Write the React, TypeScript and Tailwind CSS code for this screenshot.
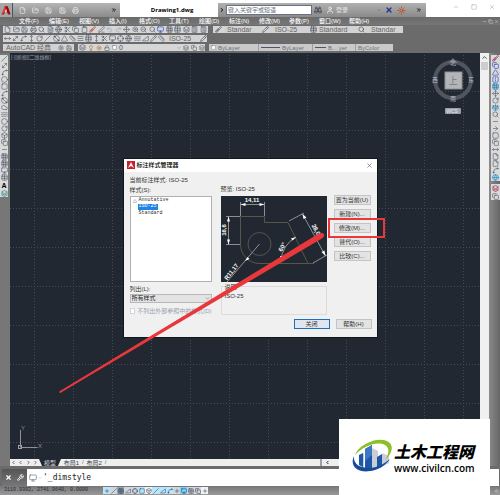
import {
  AlignJustify, ArrowLeft, ArrowRight, Binoculars, Box, Brush, Calculator, ChevronDown, ChevronLeft,
  ChevronRight, ChevronUp, ChevronsRight, Circle, Clipboard, Cloud, Copy, Crosshair, Diameter, File,
  FileText, FlipHorizontal, FolderOpen, Globe, Grid3x3, Layers, Lightbulb, Lock, Minus, Monitor, Move,
  MoveDiagonal, MoveHorizontal, MoveVertical, PenLine, Pencil, Plus, Printer, Redo2, RotateCw, Ruler,
  Save, Scale, Scissors, Search, Settings, Slash, Spline, Square, Sun, Table, Triangle, TriangleRight,
  Undo2, User, Waves, Wrench, X, ZoomIn, ZoomOut, type LucideIcon,
} from 'lucide-react';

type Tool = { name: string; icon: LucideIcon; color?: string };

const quickTools: Tool[] = [
  { name: '新建', icon: File },
  { name: '打开', icon: FolderOpen },
  { name: '保存', icon: Save },
  { name: '另存为', icon: Save },
  { name: '打印', icon: Printer },
  { name: '放弃', icon: Undo2 },
  { name: '重做', icon: Redo2 },
];

const menus = [
  '文件(F)', '编辑(E)', '视图(V)', '插入(I)', '格式(O)', '工具(T)',
  '绘图(D)', '标注(N)', '修改(M)', '参数(P)', '窗口(W)', '帮助(H)',
];

const standardTools: Tool[] = [
  { name: '新建图形', icon: File },
  { name: '打开图形', icon: FolderOpen },
  { name: '保存图形', icon: Save },
  { name: '打印图形', icon: Printer },
  { name: '打印预览', icon: Search },
  { name: '发布', icon: FileText },
  { name: '三维打印', icon: Globe },
  { name: '剪切', icon: Scissors },
  { name: '复制', icon: Copy },
  { name: '粘贴', icon: Clipboard },
  { name: '特性匹配', icon: Brush, color: 'text-orange-800' },
  { name: '块编辑器', icon: PenLine },
  { name: '撤销', icon: Undo2, color: 'text-gray-400' },
  { name: '恢复', icon: Redo2, color: 'text-gray-400' },
  { name: '平移', icon: Move },
  { name: '缩放', icon: ZoomIn },
  { name: '窗口缩放', icon: ZoomOut },
  { name: '上一个', icon: Search },
  { name: '特性', icon: Monitor, color: 'text-blue-800' },
  { name: '设计中心', icon: Grid3x3 },
  { name: '工具选项板', icon: Table },
  { name: '图纸集', icon: Layers },
  { name: '标记集', icon: Calculator },
  { name: '计算器', icon: Calculator },
];

const dimensionTools: Tool[] = [
  { name: '线性', icon: MoveHorizontal },
  { name: '对齐', icon: MoveDiagonal },
  { name: '弧长', icon: Spline },
  { name: '坐标', icon: MoveVertical },
  { name: '半径', icon: RotateCw },
  { name: '折弯', icon: Slash },
  { name: '直径', icon: Diameter },
  { name: '角度', icon: Triangle },
  { name: '快速标注', icon: Ruler },
  { name: '基线', icon: AlignJustify },
  { name: '连续', icon: Table },
  { name: '等距', icon: MoveVertical },
  { name: '打断', icon: Scissors },
  { name: '公差', icon: Monitor },
  { name: '圆心标记', icon: Crosshair },
  { name: '检验', icon: Globe },
  { name: '折弯线性', icon: Waves },
  { name: '编辑标注', icon: TriangleRight },
  { name: '编辑文字', icon: Pencil },
  { name: '标注更新', icon: Ruler },
];

const drawTools: Tool[] = [
  { name: '直线', icon: Slash },
  { name: '构造线', icon: MoveDiagonal },
  { name: '多段线', icon: Spline },
  { name: '多边形', icon: Circle },
  { name: '矩形', icon: Square },
  { name: '圆弧', icon: Spline },
  { name: '圆', icon: Diameter },
  { name: '修订云线', icon: Cloud },
  { name: '样条曲线', icon: Waves },
  { name: '椭圆', icon: Circle },
  { name: '椭圆弧', icon: RotateCw },
  { name: '插入块', icon: Box },
  { name: '创建块', icon: Copy },
  { name: '点', icon: Minus },
  { name: '图案填充', icon: Grid3x3 },
  { name: '渐变色', icon: Grid3x3 },
  { name: '面域', icon: Monitor },
  { name: '表格', icon: Table },
];

const modifyTools: Tool[] = [
  { name: '删除', icon: Brush, color: 'text-rose-900' },
  { name: '复制对象', icon: Copy, color: 'text-blue-800' },
  { name: '镜像', icon: Triangle, color: 'text-blue-800' },
  { name: '偏移', icon: FlipHorizontal, color: 'text-blue-800' },
  { name: '阵列', icon: Grid3x3, color: 'text-sky-700' },
  { name: '移动', icon: Move },
  { name: '旋转', icon: RotateCw },
  { name: '比例', icon: Scale, color: 'text-sky-700' },
  { name: '拉伸', icon: Search },
  { name: '修剪', icon: Minus },
  { name: '延伸', icon: ArrowRight },
  { name: '打断于点', icon: Square },
  { name: '打断对象', icon: Copy },
  { name: '合并', icon: MoveHorizontal },
  { name: '倒角', icon: File },
  { name: '圆角', icon: File },
  { name: '光顺曲线', icon: Spline },
  { name: '分解', icon: Globe, color: 'text-sky-600' },
];

const statusTools: Tool[] = [
  { name: '推断约束', icon: Plus, color: 'bg-sky-200' },
  { name: '捕捉模式', icon: Slash, color: 'bg-gray-300' },
  { name: '栅格显示', icon: Grid3x3, color: 'bg-slate-400' },
  { name: '正交模式', icon: TriangleRight, color: 'bg-gray-300' },
  { name: '极轴追踪', icon: Crosshair, color: 'bg-gray-300' },
  { name: '对象捕捉', icon: Square, color: 'bg-sky-200' },
  { name: '三维捕捉', icon: Box, color: 'bg-gray-100' },
  { name: '对象追踪', icon: Slash, color: 'bg-sky-200' },
  { name: '动态UCS', icon: TriangleRight, color: 'bg-sky-200' },
  { name: '动态输入', icon: Spline, color: 'bg-sky-200' },
  { name: '线宽', icon: Plus, color: 'bg-gray-300' },
  { name: '透明度', icon: Monitor, color: 'bg-sky-300' },
  { name: '快捷特性', icon: Table, color: 'bg-gray-300' },
  { name: '选择循环', icon: Copy, color: 'bg-gray-300' },
  { name: '注释监视器', icon: Plus, color: 'bg-gray-100' },
];

const dialogButton =
  'flex h-[10px] w-full items-center justify-center border border-[#c4c4c4] bg-[#e3e3e3] text-[6px] leading-none whitespace-nowrap text-[#333]';

const ToolButton = ({ tool, className = '' }: { tool: Tool; className?: string }) => {
  const Icon = tool.icon;
  return (
    <button aria-label={tool.name} className={`flex items-center justify-center ${tool.color ?? 'text-gray-600'} ${className}`}>
      <Icon size={7} strokeWidth={2} />
    </button>
  );
};

const StyleBox = ({ label, className }: { label: string; className: string }) => (
  <button className={`flex h-full shrink-0 items-center bg-[#d2d2d2] text-[7px] leading-none whitespace-nowrap text-[#666] ${className}`}>
    {label}
  </button>
);

const AppLogo = ({ className }: { className: string }) => (
  <svg viewBox="0 0 20 20" className={className}>
    <path d="M1 19 8 2h5l6 17h-5l-4-11-4 11z" fill="#b5121b" />
    <path d="M8 2 1 19l9-6z" fill="#e2413f" />
    <path d="M10 13l9 6-6-17z" fill="#8c0e15" />
    <path d="M10 8l2 5-4 1z" fill="#fff" />
  </svg>
);

const TitleBar = () => (
  <header className="flex h-[17px] items-stretch bg-white pt-[3px]">
    <div className="flex w-[120px] items-center bg-linear-to-b from-[#b5b5b5] to-[#8b8b8b]">
      <button aria-label="应用程序菜单" className="flex h-full w-[13px] items-center justify-center border-r border-gray-600 bg-[#a6a6a6]">
        <AppLogo className="size-[10px]" />
      </button>
      <div className="flex flex-1 items-center justify-between pr-[3px] pl-[4px]">
        {quickTools.map((tool, i) => (
          <ToolButton key={tool.name} tool={{ ...tool, color: i < 5 ? 'text-gray-100' : 'text-gray-400' }} className="w-[10px]" />
        ))}
        <ChevronsRight size={6} strokeWidth={3} className="text-black" />
      </div>
    </div>
    <h1 className="flex w-[98px] items-center justify-center pl-[6px] font-['Open_Sans'] text-[6px] leading-none font-bold text-black">
      Drawing1.dwg
    </h1>
    <div className="flex w-[208px] items-center bg-linear-to-b from-[#b0b0b0] to-[#8b8b8b] pr-[4px]">
      <ChevronRight size={6} strokeWidth={4} className="ml-[1px] text-black" />
      <input
        aria-label="搜索"
        placeholder="键入关键字或短语"
        className="mr-[2px] ml-[1px] h-[10px] w-[86px] border border-gray-500 bg-white px-[1px] text-[6px] leading-none placeholder:text-gray-500"
      />
      <Binoculars size={8} className="text-gray-700" />
      <User size={8} className="ml-[4px] text-white" />
      <button className="ml-[2px] text-[6px] leading-none text-gray-200">登录</button>
      <ChevronDown size={4} className="mr-[4px] ml-auto text-gray-700" />
      <X size={8} strokeWidth={4} className="text-blue-900" />
      <Sun size={9} className="mr-[10px] ml-[4px] text-orange-700" />
      <ChevronsRight size={6} strokeWidth={3} className="text-black" />
    </div>
    <div className="flex flex-1 items-start justify-end gap-[12px] pr-[5px] pt-[1px] text-gray-400">
      <button aria-label="最小化"><Minus size={6} strokeWidth={2} /></button>
      <button aria-label="最大化"><Square size={6} strokeWidth={2} /></button>
      <button aria-label="关闭窗口"><X size={6} strokeWidth={2} /></button>
    </div>
  </header>
);

const MenuBar = () => (
  <nav className="flex h-[8px] items-center bg-linear-to-b from-[#6a6a6a] to-[#777] pl-[19px]">
    {menus.map((menu) => (
      <button key={menu} className="w-[30px] text-left text-[6px] leading-none font-medium whitespace-nowrap text-white">
        {menu}
      </button>
    ))}
    <div className="ml-auto flex gap-[1px] pr-[1px] text-gray-300">
      <Minus size={5} />
      <Copy size={5} />
      <X size={5} />
    </div>
  </nav>
);

const Toolbars = () => (
  <div className="flex flex-col gap-[2px] bg-[#6b6b6b] pt-[1px] pb-[2px] pl-[3px]">
    <div className="flex h-[7px] gap-[5px]">
      <div className="flex w-[205px] justify-between bg-[#d6d6d6] px-[1px]">
        {standardTools.map((tool) => <ToolButton key={tool.name} tool={tool} />)}
      </div>
      <div className="flex bg-[#d6d6d6]">
        <Brush size={7} className="mx-[2px] shrink-0 text-gray-700" />
        <StyleBox label="Standar" className="w-[38px] pl-[3px]" />
        <Pencil size={7} className="shrink-0 text-gray-700" />
        <StyleBox label="ISO-25" className="w-[41px] pl-[6px]" />
        <Table size={7} className="shrink-0 text-gray-700" />
        <StyleBox label="Standard" className="w-[41px] pl-[2px]" />
        <Search size={7} className="shrink-0 text-gray-700" />
        <StyleBox label="Standar" className="w-[38px] pl-[6px]" />
      </div>
    </div>
    <div className="flex h-[7px]">
      <div className="flex w-[163px] justify-between bg-[#d6d6d6] px-[1px]">
        {dimensionTools.map((tool) => <ToolButton key={tool.name} tool={tool} />)}
      </div>
      <StyleBox label="ISO-25" className="w-[34px] pl-[3px]" />
      <Pencil size={7} className="bg-[#d6d6d6] text-gray-700" />
    </div>
    <div className="flex h-[7px] gap-[4px]">
      <div className="flex w-[71px] items-center bg-[#d2d2d2]">
        <StyleBox label="AutoCAD 经典" className="flex-1 pl-[3px]" />
        <Settings size={6} className="mr-[2px] text-gray-600" />
        <Save size={6} className="mr-[2px] text-gray-600" />
      </div>
      <div className="flex w-[127px] items-center gap-[2px] bg-[#d6d6d6] pl-[1px] text-gray-600">
        <Layers size={7} />
        <Lightbulb size={6} className="text-yellow-700" />
        <Sun size={6} className="text-yellow-700" />
        <Lock size={6} />
        <Square size={5} fill="#fff" />
        <span className="text-[7px] leading-none">0</span>
        <ChevronDown size={4} className="ml-auto" />
        <Layers size={6} />
        <Copy size={6} />
        <Layers size={6} />
      </div>
      <div className="flex bg-[#c9c9c9] text-[6px]">
        <button className="flex w-[49px] items-center gap-[2px] pl-[2px] leading-none text-gray-500">
          <Square size={5} fill="#fff" />ByLayer
        </button>
        <button className="flex w-[54px] items-center gap-[2px] border-l border-gray-400 pl-[2px] leading-none text-gray-500">
          <span className="h-px w-[19px] bg-gray-600" />ByLayer
        </button>
        <button className="flex w-[43px] items-center gap-[2px] border-l border-gray-400 pl-[2px] leading-none text-gray-500">
          <span className="h-px w-[11px] bg-gray-600" />B... yer
        </button>
        <button className="flex w-[38px] items-center border-l border-gray-400 pl-[2px] leading-none text-gray-500">
          ByColor
        </button>
      </div>
    </div>
  </div>
);

const CanvasGrid = () => (
  <svg className="absolute inset-0 size-full">
    <defs>
      <pattern id="grid" x="24" y="38" width="39" height="39" patternUnits="userSpaceOnUse">
        <path d="M0 .5H39M.5 0V39" stroke="#444b55" strokeWidth="1" strokeDasharray="1 2" />
      </pattern>
    </defs>
    <rect width="100%" height="100%" fill="url(#grid)" />
  </svg>
);

const ViewCube = () => (
  <svg viewBox="0 0 48 62" className="absolute top-[3px] right-[3px] h-[62px] w-[48px]">
    <circle cx="24" cy="24" r="18" fill="none" stroke="#50565f" strokeWidth="4" />
    <path d="M24 2l5 5H19z" fill="#6c7279" />
    <rect x="16" y="16" width="17" height="17" fill="#b3b5b8" stroke="#8d9094" />
    <g fill="#b8bcc2" fontSize="6" textAnchor="middle">
      <text x="24" y="9">北</text>
      <text x="24" y="45">南</text>
      <text x="6" y="26">西</text>
      <text x="42" y="26">东</text>
    </g>
    <text x="24" y="28" fill="#777b80" fontSize="9" textAnchor="middle">上</text>
    <rect x="16" y="52" width="16" height="6" rx="1" fill="#9a9ead" />
    <text x="23" y="57" fill="#e5e7eb" fontSize="5" textAnchor="middle">WCS</text>
  </svg>
);

const UcsIcon = () => (
  <svg viewBox="0 0 36 28" className="absolute bottom-[6px] left-[6px] h-[28px] w-[36px]">
    <path d="M4.500 5v17M4.500 22.500h17" stroke="#8d9198" fill="none" />
    <rect x="2.500" y="20.500" width="3" height="3" fill="none" stroke="#9ca0a7" />
    <text x="5" y="5" fill="#8d9198" fontSize="6">Y</text>
    <text x="22" y="23" fill="#8d9198" fontSize="6">X</text>
  </svg>
);

const LayoutTabs = () => (
  <div className="flex h-[7px] items-stretch bg-[#eeeeec] text-[6px] leading-none">
    <div className="flex w-[29px] items-center justify-around text-gray-600">
      <ChevronLeft size={5} strokeWidth={4} />
      <ChevronLeft size={5} strokeWidth={4} />
      <ChevronRight size={5} strokeWidth={4} />
      <ChevronRight size={5} strokeWidth={4} />
    </div>
    <button className="w-[22px] bg-[#222831] leading-none text-gray-300 [clip-path:polygon(0_0,100%_0,86%_100%,14%_100%)]">模型</button>
    <button className="w-[21px] leading-none text-gray-700">布局1</button>
    <span className="text-gray-500">/</span>
    <button className="w-[21px] leading-none text-gray-700">布局2</button>
    <span className="text-gray-500">/</span>
    <span className="ml-auto mr-[150px] flex items-center border-l-2 border-gray-400 pl-[3px]">
      <ChevronLeft size={5} strokeWidth={4} />
    </span>
  </div>
);

const Preview = () => (
  <svg viewBox="0 0 106 86" className="h-[86px] w-full bg-[#222831]">
    <g fill="none" stroke="#56564a">
      <path d="M19.500 48V20.500H43.500V26.500H67L87 67.500H38A19 19 0 0 1 19.500 48M87 67.500h6" />
      <circle cx="38.500" cy="48" r="11.500" />
    </g>
    <g fill="none" stroke="#b9bcc0" strokeWidth=".7">
      <path d="M19.500 6v14M43.500 6v14M20 8.500h23" />
      <path d="M5 20.500h14M5 48.500h14M7.500 21v27" />
      <path d="M68 25l15-8M92 67l14-8M81.500 18l23 42" />
      <path d="M38.500 48L6 86M75 41A29 29 0 0 0 60 65" />
    </g>
    <g fill="#fff">
      <path d="M19.500 8.500l5-1.500v3zM43.500 8.500l-5-1.500v3z" />
      <path d="M7.500 20.500L6 25.500h3zM7.500 48.500L6 43.500h3z" />
      <path d="M81.500 18l1 5 3-1.500zM104.500 60l-4-4 3-1.500zM24 65l4.500-2-2-2z" />
      <path d="M75 41l-5 1.500 1.500 2zM60 65l-1-5h3z" />
    </g>
    <g fill="#fff" fontSize="6" fontWeight="600" textAnchor="middle">
      <text x="31" y="6">14,11</text>
      <text transform="translate(5 34) rotate(-90)">16,6</text>
      <text transform="translate(12 77) rotate(-52)">R11,17</text>
      <text transform="translate(63 52) rotate(-62)">60°</text>
      <text transform="translate(94 36) rotate(62)">28,07</text>
    </g>
  </svg>
);

const StyleDialog = () => (
  <section role="dialog" aria-label="标注样式管理器" className="relative w-[253px] bg-[#f0f0f0] text-[6px] leading-none text-[#333] shadow-[0_0_0_1px_#11161c]">
    <div className="flex h-[13px] items-center bg-white pr-[4px] pl-[3px]">
      <span className="mr-[2px] flex size-[8px] items-center justify-center bg-[#c8202c]">
        <svg viewBox="0 0 8 8" className="size-[8px]">
          <path d="M1 7l3-6 3 6-3-2z" fill="#fff" />
        </svg>
      </span>
      <h2 className="text-[6px] leading-none font-medium text-black">标注样式管理器</h2>
      <button aria-label="关闭对话框" className="ml-auto text-gray-600"><X size={7} strokeWidth={2} /></button>
    </div>
    <p className="px-[6px] pt-[5px] pb-[2px]">当前标注样式: ISO-25</p>
    <div className="flex px-[6px]">
      <div className="mr-[9px] w-[82px]">
        <h3 className="flex h-[11px] items-center">样式(S):</h3>
        <ul className="h-[86px] border border-[#b0b0b0] bg-white pt-px pl-[2px] font-['Liberation_Mono'] text-[5px]">
          <li className="flex h-[6px] items-center">
            <Triangle size={4} className="mr-[2px] text-gray-600" />
            <button className="leading-none">Annotative</button>
          </li>
          <li className="flex h-[6px] items-center pl-[5px]">
            <button className="h-[6px] bg-[#1f84e6] pr-px pl-px leading-none text-white">ISO-25</button>
          </li>
          <li className="flex h-[7px] items-center pl-[6px]">
            <button className="leading-none">Standard</button>
          </li>
        </ul>
        <label htmlFor="list-filter" className="mt-[2px] flex h-[10px] items-center">列出(L):</label>
        <div className="relative">
          <select id="list-filter" className="block h-[9px] w-full appearance-none border border-[#b8b8b8] bg-[#e3e3e3] pl-px text-[6px] leading-none text-[#222]">
            <option>所有样式</option>
            <option>正在使用的样式</option>
          </select>
          <ChevronDown size={5} className="pointer-events-none absolute top-[2px] right-[2px] text-gray-600" />
        </div>
        <label className="mt-[3px] flex h-[10px] items-center gap-[2px] whitespace-nowrap text-gray-400">
          <input type="checkbox" disabled className="size-[6px] appearance-none border border-gray-300 bg-white" />
          不列出外部参照中的样式(D)
        </label>
      </div>
      <div className="mr-[7px] flex-1">
        <h3 className="flex h-[11px] items-start pt-px">预览: ISO-25</h3>
        <Preview />
        <fieldset className="mt-[2px] h-[31px] border border-[#dcdcdc] pl-[3px]">
          <legend className="leading-none">说明</legend>
          <p className="pt-[3px]">ISO-25</p>
        </fieldset>
      </div>
      <div className="flex w-[37px] flex-col gap-[4px] pt-[10px]">
        <button className={dialogButton}>置为当前(U)</button>
        <button className={dialogButton}>新建(N)...</button>
        <button className={dialogButton}>修改(M)...</button>
        <button className={dialogButton}>替代(O)...</button>
        <button className={dialogButton}>比较(C)...</button>
      </div>
    </div>
    <div className="flex justify-end gap-[6px] px-[5px] pt-[3px] pb-[8px]">
      <div className="w-[36px]">
        <button className="flex h-[10px] w-full items-center justify-center border border-[#1f6fc0] bg-[#e1e6ec] text-[6px] leading-none">关闭</button>
      </div>
      <div className="w-[36px]">
        <button className={dialogButton}>帮助(H)</button>
      </div>
    </div>
    {/* callout pointing at the modify button */}
    <svg viewBox="0 0 253 178" className="pointer-events-none absolute top-0 left-0 h-[178px] w-[253px] overflow-visible">
      <path d="M-64 234L-64 232.500L194 75C200 72 203 77 197 80Z" fill="#e8383c" />
      <path d="M-64 233L60 158" stroke="#e8383c" strokeWidth="1.500" strokeLinecap="round" />
      <rect x="205" y="60" width="55" height="18" fill="none" stroke="#e8383c" strokeWidth="2" />
    </svg>
  </section>
);

const SiteBadge = () => (
  <a href="#civilcn" className="absolute right-[10px] bottom-0 flex h-[76px] w-[151px] items-start bg-white pt-[20px] pl-[13px]">
    <svg viewBox="0 0 42 36" className="h-[36px] w-[42px]">
      <path d="M20 9l6 3v17l-6 1zM30 14l7 3v7l-7 4zM8 16l4-2v15l-4-2z" fill="#c9ced6" />
      <path d="M7 16l4-2v14l-4-2zM13 10l7-4v24l-7-1zM25 18l5-3v13l-5 2z" fill="#1f57a8" />
      <path d="M13 10l7-4v10l-7 6z" fill="#3b78c6" />
      <path d="M3 16C7 5 25-2 35 2c8 4 5 13-2 19 4-6 5-12 0-15C25 2 11 7 3 16z" fill="#8dbf26" />
      <path d="M2 17c-5 11 5 17 16 15 9-1 17-7 20-12-6 5-13 9-21 9C8 29 1 25 2 17z" fill="#174a9c" />
    </svg>
    <span className="flex flex-col pt-[5px]">
      <strong className="text-[16px] leading-[18px] font-black whitespace-nowrap text-black italic">土木工程网</strong>
      <span className="font-['Open_Sans'] text-[10px] leading-[12px] font-semibold whitespace-nowrap text-black">www.civilcn.com</span>
    </span>
  </a>
);

const App = () => {
  return (
    <div className="relative flex min-h-screen w-full flex-col overflow-hidden bg-[#6b6b6b] font-['Liberation_Sans','Noto_Sans_CJK_SC',sans-serif]">
      <TitleBar />
      <MenuBar />
      <Toolbars />

      <main className="flex flex-1 items-stretch">
        <div className="w-[10px] bg-[#777]">
          <div className="mt-[2px] flex w-[8px] flex-col bg-[#dadada]">
            {drawTools.map((tool) => <ToolButton key={tool.name} tool={tool} className="h-[7px]" />)}
            <button className="h-[8px] text-[7px] leading-none font-bold">A</button>
            <ToolButton tool={{ name: '添加选定对象', icon: Layers, color: 'text-teal-700' }} className="h-[8px]" />
          </div>
        </div>
        <div className="flex flex-1 flex-col">
          <div className="relative flex-1 overflow-hidden bg-[#222831]">
            <CanvasGrid />
            <p className="relative pt-[2px] pl-px text-[5px] leading-none text-gray-400">[-][俯视][二维线框]</p>
            <ViewCube />
            <UcsIcon />
          </div>
          <LayoutTabs />
        </div>
        <div className="flex w-[9px] flex-col items-center bg-[#f0f0f0]">
          <ChevronUp size={7} strokeWidth={3} className="mt-[1px] text-gray-700" />
          <div className="mt-[1px] h-[8px] w-[7px] bg-[#cdcdcd]" />
        </div>
        <div className="w-[11px] bg-linear-to-r from-[#8a8a8a] to-[#666] pl-[2px]">
          <div className="mt-[2px] flex flex-col bg-[#dadada]">
            {modifyTools.map((tool) => <ToolButton key={tool.name} tool={tool} className="h-[7px]" />)}
          </div>
          <div className="mt-[3px] flex flex-col bg-[#dadada]">
            <ToolButton tool={{ name: '绘图次序', icon: Layers, color: 'text-rose-900' }} className="h-[8px]" />
            <ToolButton tool={{ name: '后置', icon: Copy }} className="h-[8px]" />
          </div>
        </div>
      </main>

      <footer className="pt-[3px]">
        <div className="flex h-[17px] pr-px pl-[2px]">
          <div className="flex w-[25px] items-center justify-around bg-linear-to-b from-[#555] to-[#777] text-white">
            <button aria-label="关闭命令行"><X size={7} strokeWidth={4} /></button>
            <button aria-label="自定义"><Wrench size={7} strokeWidth={3} /></button>
          </div>
          <label htmlFor="command" className="flex items-center bg-white pl-[2px] text-gray-500">
            <Monitor size={8} />
            <ChevronDown size={4} className="mx-[1px]" />
          </label>
          <input
            id="command"
            aria-label="命令"
            defaultValue="'_dimstyle"
            className="min-w-0 flex-1 bg-white font-['DejaVu_Sans_Mono'] text-[8px] leading-none text-[#222] outline-none"
          />
        </div>
        <div className="flex h-[9px] items-center bg-linear-to-b from-[#777] to-[#999] pl-[4px]">
          <span className="w-[99px] font-['Liberation_Mono'] text-[5px] leading-none whitespace-nowrap text-gray-800">
            3110.9302, 2741.9640, 0.0000
          </span>
          {statusTools.map((tool) => (
            <button key={tool.name} aria-label={tool.name} className={`flex size-[7px] items-center justify-center text-gray-700 ${tool.color}`}>
              <tool.icon size={6} />
            </button>
          ))}
          <ArrowLeft size={6} className="ml-auto text-gray-300" />
        </div>
      </footer>

      <div className="pointer-events-none absolute inset-0 flex items-center justify-center">
        <div className="pointer-events-auto">
          <StyleDialog />
        </div>
      </div>
      <SiteBadge />
    </div>
  );
};

export default App;
